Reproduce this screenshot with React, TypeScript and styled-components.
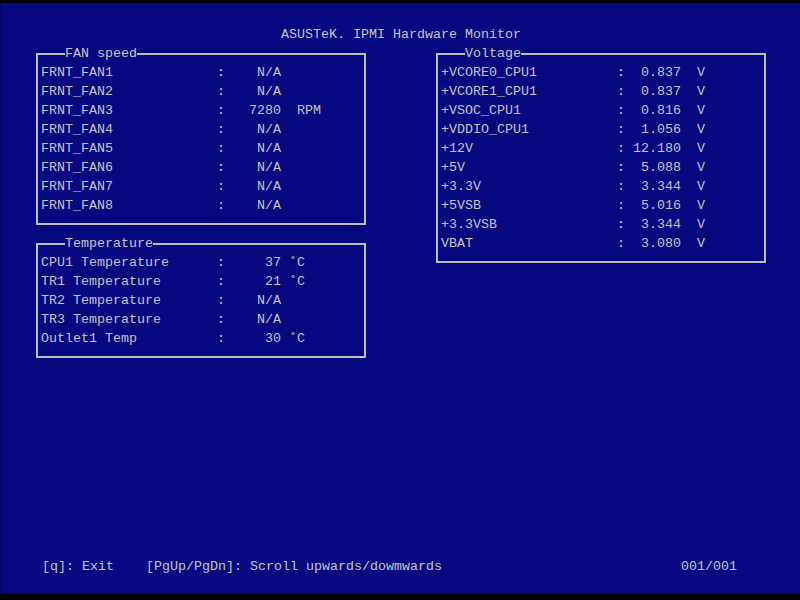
import React from 'react';
import styled, { createGlobalStyle } from 'styled-components';

type Reading = {
  label: string;
  value: string;
  unit?: string;
};

const fans: Reading[] = [
  { label: 'FRNT_FAN1', value: 'N/A' },
  { label: 'FRNT_FAN2', value: 'N/A' },
  { label: 'FRNT_FAN3', value: '7280', unit: '  RPM' },
  { label: 'FRNT_FAN4', value: 'N/A' },
  { label: 'FRNT_FAN5', value: 'N/A' },
  { label: 'FRNT_FAN6', value: 'N/A' },
  { label: 'FRNT_FAN7', value: 'N/A' },
  { label: 'FRNT_FAN8', value: 'N/A' },
];

const temps: Reading[] = [
  { label: 'CPU1 Temperature', value: '37', unit: ' \u02daC' },
  { label: 'TR1 Temperature', value: '21', unit: ' \u02daC' },
  { label: 'TR2 Temperature', value: 'N/A' },
  { label: 'TR3 Temperature', value: 'N/A' },
  { label: 'Outlet1 Temp', value: '30', unit: ' \u02daC' },
];

const voltages: Reading[] = [
  { label: '+VCORE0_CPU1', value: '0.837', unit: '  V' },
  { label: '+VCORE1_CPU1', value: '0.837', unit: '  V' },
  { label: '+VSOC_CPU1', value: '0.816', unit: '  V' },
  { label: '+VDDIO_CPU1', value: '1.056', unit: '  V' },
  { label: '+12V', value: '12.180', unit: '  V' },
  { label: '+5V', value: '5.088', unit: '  V' },
  { label: '+3.3V', value: '3.344', unit: '  V' },
  { label: '+5VSB', value: '5.016', unit: '  V' },
  { label: '+3.3VSB', value: '3.344', unit: '  V' },
  { label: 'VBAT', value: '3.080', unit: '  V' },
];

type PanelProps = {
  title: string;
  rows: Reading[];
};

const SensorPanel: React.FC<PanelProps> = ({ title, rows }) => {
  return (
    <Panel>
      <PanelTitle>{title}</PanelTitle>
      {rows.map((row) => (
        <Row key={row.label}>
          <Label>{row.label}</Label>
          <Colon>:</Colon>
          <Value>{row.value}</Value>
          {row.unit && <Unit>{row.unit}</Unit>}
        </Row>
      ))}
    </Panel>
  );
};

const App: React.FC = () => {
  return (
    <>
      <GlobalStyle />
      <Screen>
        <Title>ASUSTeK. IPMI Hardware Monitor</Title>
        <Main>
          <Column>
            <SensorPanel title='FAN speed' rows={fans} />
            <SensorPanel title='Temperature' rows={temps} />
          </Column>
          <Column>
            <SensorPanel title='Voltage' rows={voltages} />
          </Column>
        </Main>
        <Footer>
          <KeyHint>[q]: Exit</KeyHint>
          <KeyHint $grow>[PgUp/PgDn]: Scroll upwards/dowmwards</KeyHint>
          <PageCount>001/001</PageCount>
        </Footer>
      </Screen>
    </>
  );
};

const GlobalStyle = createGlobalStyle`
  html, body {
    margin: 0;
    padding: 0;
    background: #000;
  }
  body {
    font-family: "Liberation Mono", "DejaVu Sans Mono", monospace;
    font-size: 13.333px;
    color: #c4c4c8;
  }
`;

const Screen = styled.div`
  width: 800px;
  height: 591px;
  margin-top: 3px;
  padding-top: 3px;
  box-sizing: border-box;
  background: #07077f;
  border-left: 2px solid #050566;
  display: flex;
  flex-direction: column;
  white-space: pre;
`;

const Title = styled.div`
  height: 19px;
  line-height: 19px;
  margin-top: 19px;
  text-align: center;
`;

const Main = styled.div`
  display: flex;
  gap: 70px;
  padding-left: 34px;
`;

const Column = styled.div`
  display: flex;
  flex-direction: column;
  gap: 9px;
  width: 330px;
`;

const Panel = styled.fieldset`
  margin: 0;
  padding: 0 0 8px 3px;
  min-inline-size: 0;
  border: 2px solid #bcbcbc;
`;

const PanelTitle = styled.legend`
  margin-left: 24px;
  padding: 0;
  height: 19px;
  line-height: 19px;
`;

const Row = styled.div`
  display: flex;
  height: 19px;
  line-height: 19px;
`;

const Label = styled.span`
  width: 176px;
`;

const Colon = styled.span`
  width: 8px;
`;

const Value = styled.span`
  width: 56px;
  text-align: right;
`;

const Unit = styled.span`
  white-space: pre;
`;

const Footer = styled.div`
  display: flex;
  height: 19px;
  line-height: 19px;
  margin-top: auto;
  margin-bottom: 18px;
  padding-left: 40px;
`;

const KeyHint = styled.span<{ $grow?: boolean }>`
  width: ${({ $grow }) => ($grow ? 'auto' : '104px')};
  flex: ${({ $grow }) => ($grow ? '1' : 'none')};
`;

const PageCount = styled.span`
  margin-right: 63px;
`;

export default App;
